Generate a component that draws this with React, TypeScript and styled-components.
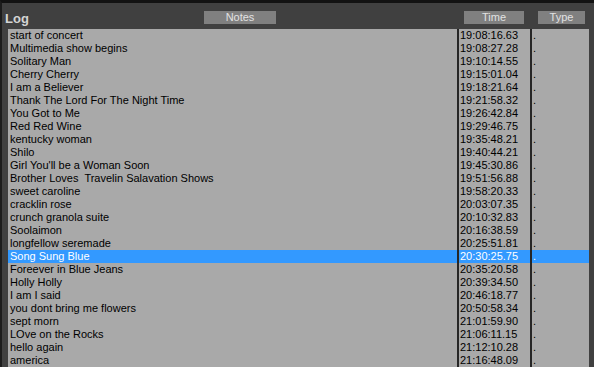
import React from 'react';
import styled, { createGlobalStyle } from 'styled-components';

const GlobalStyle = createGlobalStyle`
  html, body {
    margin: 0;
    padding: 0;
    background: #404040;
    overflow: hidden;
  }
`;

const Frame = styled.div`
  width: 594px;
  height: 367px;
  box-sizing: border-box;
  background: #404040;
  border-top: 3px solid #121212;
  border-left: 2px solid #1c1c1c;
  display: flex;
  flex-direction: column;
  font-family: Tahoma, 'DejaVu Sans', sans-serif;
  overflow: hidden;
`;

const Header = styled.div`
  height: 26px;
  flex: none;
  display: grid;
  grid-template-columns: 202px 72px 188px 60px 14px 47px;
  align-items: start;
  padding-top: 8px;
  box-sizing: border-box;
`;

const Title = styled.div`
  font-family: 'Liberation Sans', Arial, sans-serif;
  font-weight: bold;
  font-size: 13px;
  color: #d4d4d4;
  padding-left: 3px;
  line-height: 16px;
`;

const ColumnButton = styled.div`
  height: 13px;
  background: #808080;
  color: #e2e2e2;
  font-family: 'Liberation Sans', Arial, sans-serif;
  font-size: 11px;
  line-height: 13px;
  text-align: center;
`;

const Body = styled.div`
  display: flex;
  flex-direction: column;
  width: 581px;
  margin-left: 6px;
`;

const Row = styled.div<{ $selected?: boolean }>`
  display: grid;
  grid-template-columns: 449px 73px 59px;
  height: 13px;
  flex: none;
  font-family: 'Liberation Sans', Arial, sans-serif;
  font-size: 11px;
  line-height: 13px;
  color: ${(p) => (p.$selected ? '#ffffff' : '#000000')};
  background: ${(p) => (p.$selected ? '#3399ff' : '#a9a9a9')};
`;

const Cell = styled.div<{ $divider?: boolean }>`
  padding-left: ${(p) => (p.$divider ? '1px' : '2px')};
  border-left: ${(p) => (p.$divider ? '2px solid #262626' : 'none')};
  white-space: pre;
  overflow: hidden;
`;

const entries: [string, string][] = [
  ['start of concert', '19:08:16.63'],
  ['Multimedia show begins', '19:08:27.28'],
  ['Solitary Man', '19:10:14.55'],
  ['Cherry Cherry', '19:15:01.04'],
  ['I am a Believer', '19:18:21.64'],
  ['Thank The Lord For The Night Time', '19:21:58.32'],
  ['You Got to Me', '19:26:42.84'],
  ['Red Red Wine', '19:29:46.75'],
  ['kentucky woman', '19:35:48.21'],
  ['Shilo', '19:40:44.21'],
  ["Girl You'll be a Woman Soon", '19:45:30.86'],
  ['Brother Loves  Travelin Salavation Shows', '19:51:56.88'],
  ['sweet caroline', '19:58:20.33'],
  ['cracklin rose', '20:03:07.35'],
  ['crunch granola suite', '20:10:32.83'],
  ['Soolaimon', '20:16:38.59'],
  ['longfellow seremade', '20:25:51.81'],
  ['Song Sung Blue', '20:30:25.75'],
  ['Foreever in Blue Jeans', '20:35:20.58'],
  ['Holly Holly', '20:39:34.50'],
  ['I am I said', '20:46:18.77'],
  ['you dont bring me flowers', '20:50:58.34'],
  ['sept morn', '21:01:59.90'],
  ['LOve on the Rocks', '21:06:11.15'],
  ['hello again', '21:12:10.28'],
  ['america', '21:16:48.09'],
];

const SELECTED = 17;

export default function App() {
  return (
    <>
      <GlobalStyle />
      <Frame>
        <Header>
          <Title>Log</Title>
          <ColumnButton>Notes</ColumnButton>
          <span />
          <ColumnButton>Time</ColumnButton>
          <span />
          <ColumnButton>Type</ColumnButton>
        </Header>
        <Body>
          {entries.map(([note, time], i) => (
            <Row key={i} $selected={i === SELECTED}>
              <Cell>{note}</Cell>
              <Cell $divider>{time}</Cell>
              <Cell $divider>.</Cell>
            </Row>
          ))}
        </Body>
      </Frame>
    </>
  );
}
